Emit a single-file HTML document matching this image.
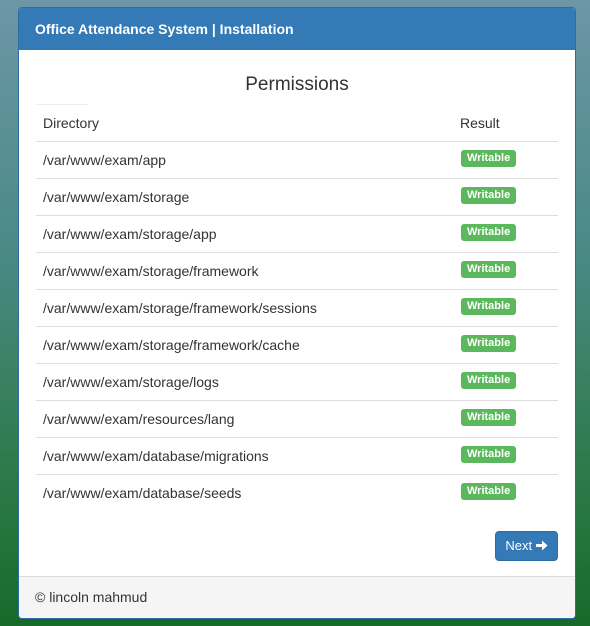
<!DOCTYPE html>
<html><head><style>
body{margin:0;width:590px;height:626px;background:linear-gradient(#6d96a6 0%,#4a8a86 40%,#2e7a4a 75%,#176a2a 100%);font-family:"Liberation Sans",sans-serif;overflow:hidden;position:relative}
.panel{position:absolute;left:18px;top:7px;width:556px;height:610px;background:#fff;border:1px solid #2e6da4;border-radius:4px;overflow:hidden}
.head{background:#337ab7;color:#fff;font-weight:bold;font-size:14px;height:42px;line-height:42px;padding-left:16px}
h3{margin:0;position:absolute;top:66px;width:100%;text-align:center;font-weight:normal;font-size:19px;color:#333}
.sep{position:absolute;left:17px;top:96px;width:52px;border-top:1px solid #eee}
.row{position:absolute;left:17px;width:522px;height:37px;border-top:1px solid #ddd;font-size:14px;color:#333}
.row span{position:absolute;left:7px;top:10px}
.b{position:absolute;left:425px;top:8px;background:#5cb85c;color:#fff;font-size:11px;font-weight:bold;padding:2px 6px 3px;border-radius:3px}
.btn{position:absolute;left:476px;top:523px;width:61px;height:28px;background:#337ab7;border:1px solid #2e6da4;border-radius:4px;color:#fff;font-size:13px;line-height:28px;text-align:center}
.foot{position:absolute;left:0;top:568px;width:100%;height:42px;background:#f5f5f5;border-top:1px solid #ddd;font-size:14px;color:#333;line-height:40px;padding-left:16px}
</style></head><body><div class="panel">
<div class="head">Office Attendance System | Installation</div>
<h3>Permissions</h3><div class="sep"></div>
<div class="row" style="top:97px;border-top:none"><span style="top:10px">Directory</span><span style="left:424px;top:10px">Result</span></div>
<div class="row" style="top:133px"><span>/var/www/exam/app</span><div class="b">Writable</div></div>
<div class="row" style="top:170px"><span>/var/www/exam/storage</span><div class="b">Writable</div></div>
<div class="row" style="top:207px"><span>/var/www/exam/storage/app</span><div class="b">Writable</div></div>
<div class="row" style="top:244px"><span>/var/www/exam/storage/framework</span><div class="b">Writable</div></div>
<div class="row" style="top:281px"><span>/var/www/exam/storage/framework/sessions</span><div class="b">Writable</div></div>
<div class="row" style="top:318px"><span>/var/www/exam/storage/framework/cache</span><div class="b">Writable</div></div>
<div class="row" style="top:355px"><span>/var/www/exam/storage/logs</span><div class="b">Writable</div></div>
<div class="row" style="top:392px"><span>/var/www/exam/resources/lang</span><div class="b">Writable</div></div>
<div class="row" style="top:429px"><span>/var/www/exam/database/migrations</span><div class="b">Writable</div></div>
<div class="row" style="top:466px"><span>/var/www/exam/database/seeds</span><div class="b">Writable</div></div>
<div class="btn">Next <svg width="12" height="11" viewBox="0 0 12 11" style="vertical-align:-1px"><path d="M0 4h6V0.5L11.5 5.5 6 10.5V7H0z" fill="#fff"/></svg></div>
<div class="foot">© lincoln mahmud</div>
</div></body></html>
